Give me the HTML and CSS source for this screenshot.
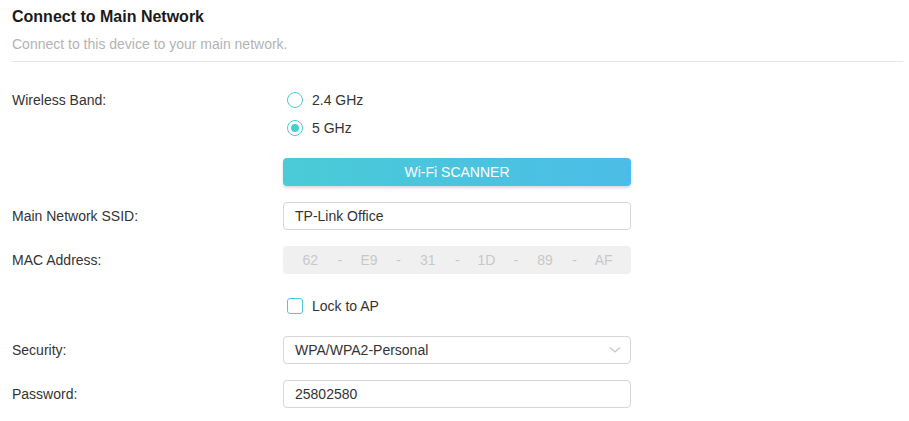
FILE: index.html
```html
<!DOCTYPE html>
<html>
<head>
<meta charset="utf-8">
<link rel="stylesheet" href="styles.css">
</head>
<body>
<div class="page">
  <div class="header">
    <div class="title">Connect to Main Network</div>
    <div class="subtitle">Connect to this device to your main network.</div>
  </div>
  <div class="form">
    <div class="row">
      <div class="label">Wireless Band:</div>
      <div class="control">
        <div class="option"><span class="radio"></span><span>2.4 GHz</span></div>
        <div class="option"><span class="radio checked"></span><span>5 GHz</span></div>
      </div>
    </div>
    <div class="row">
      <div class="label"></div>
      <div class="control"><div class="button">Wi-Fi SCANNER</div></div>
    </div>
    <div class="row">
      <div class="label">Main Network SSID:</div>
      <div class="control"><div class="input">TP-Link Office</div></div>
    </div>
    <div class="row">
      <div class="label">MAC Address:</div>
      <div class="control">
        <div class="mac">
          <span class="cell">62</span><span class="dash">-</span>
          <span class="cell">E9</span><span class="dash">-</span>
          <span class="cell">31</span><span class="dash">-</span>
          <span class="cell">1D</span><span class="dash">-</span>
          <span class="cell">89</span><span class="dash">-</span>
          <span class="cell">AF</span>
        </div>
      </div>
    </div>
    <div class="row row-check">
      <div class="label"></div>
      <div class="control">
        <div class="option"><span class="checkbox"></span><span>Lock to AP</span></div>
      </div>
    </div>
    <div class="row">
      <div class="label">Security:</div>
      <div class="control">
        <div class="input select">
          <span>WPA/WPA2-Personal</span>
          <svg class="chev" width="12" height="8" viewBox="0 0 12 8"><path d="M1 1.5 L6 6 L11 1.5" fill="none" stroke="#c8c8c8" stroke-width="1.3"/></svg>
        </div>
      </div>
    </div>
    <div class="row">
      <div class="label">Password:</div>
      <div class="control"><div class="input">25802580</div></div>
    </div>
  </div>
</div>
</body>
</html>
```
FILE: styles.css
```css
html, body {
  margin: 0;
  padding: 0;
  background: #ffffff;
}
.page {
  font-family: "Liberation Sans", Arial, sans-serif;
  font-size: 14px;
  color: #333333;
  padding: 7px 6px 0 12px;
}
.header {
  border-bottom: 1px solid #e6e6e6;
  padding-bottom: 7px;
}
.title {
  font-size: 16px;
  font-weight: bold;
  line-height: 20px;
  color: #1a1a1a;
}
.subtitle {
  margin-top: 7px;
  line-height: 20px;
  color: #b3b3b3;
}
.form {
  padding-top: 24px;
}
.row {
  display: grid;
  grid-template-columns: 271px 348px;
  margin-top: 16px;
}
.row:first-child {
  margin-top: 0;
}
.row-check {
  margin-top: 18px;
}
.label {
  line-height: 28px;
  height: 28px;
}
.option {
  display: flex;
  align-items: center;
  height: 28px;
  padding-left: 4px;
}
.radio {
  width: 14px;
  height: 14px;
  border: 1px solid #4acbd6;
  border-radius: 50%;
  margin-right: 9px;
  position: relative;
  box-sizing: content-box;
}
.radio.checked::after {
  content: "";
  position: absolute;
  left: 3px;
  top: 3px;
  width: 8px;
  height: 8px;
  border-radius: 50%;
  background: #4acbd6;
}
.checkbox {
  width: 14px;
  height: 14px;
  border: 1px solid #4acbd6;
  border-radius: 3px;
  margin-right: 9px;
}
.button {
  height: 28px;
  line-height: 28px;
  border-radius: 4px;
  background: linear-gradient(to right, #4acbd6, #4bbde7);
  box-shadow: 0 2px 3px rgba(0, 0, 0, 0.15);
  color: #ffffff;
  text-align: center;
}
.input {
  height: 28px;
  box-sizing: border-box;
  border: 1px solid #d6d6d6;
  border-radius: 4px;
  line-height: 26px;
  padding: 0 11px;
  color: #333333;
}
.select {
  display: flex;
  justify-content: space-between;
  align-items: center;
}
.chev {
  margin-right: -2px;
}
.mac {
  height: 28px;
  border-radius: 4px;
  background: #f0f0f0;
  display: flex;
  align-items: center;
  color: #c8c8c8;
}
.cell {
  flex: 1;
  text-align: center;
}
.dash {
  width: 4px;
  text-align: center;
}
```
